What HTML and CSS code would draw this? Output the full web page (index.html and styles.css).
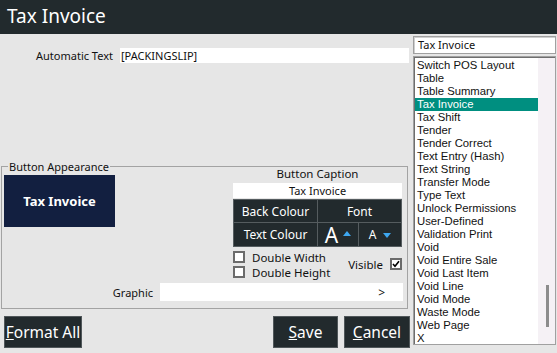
FILE: index.html
```html
<!DOCTYPE html>
<html>
<head>
<meta charset="utf-8">
<link rel="stylesheet" href="styles.css">
</head>
<body>
<div class="window">
  <header class="titlebar">Tax Invoice</header>
  <div class="main">
    <div class="left">
      <div class="auto-row">
        <span class="field-label auto-label">Automatic Text</span>
        <div class="textbox auto-input">[PACKINGSLIP]</div>
      </div>

      <div class="group">
        <span class="legend">Button Appearance</span>
        <div class="group-top">
          <div class="preview">Tax Invoice</div>
          <div class="caption-col">
            <div class="caption-label">Button Caption</div>
            <div class="caption-input">Tax Invoice</div>
            <div class="style-grid">
              <div class="cell">Back Colour</div>
              <div class="cell span2">Font</div>
              <div class="cell">Text Colour</div>
              <div class="cell"><span class="big-a">A</span><span class="tri up"></span></div>
              <div class="cell"><span class="small-a">A</span><span class="tri down"></span></div>
            </div>
            <div class="checks">
              <div class="check-list">
                <div class="check"><span class="box"></span><span>Double Width</span></div>
                <div class="check"><span class="box"></span><span>Double Height</span></div>
              </div>
              <div class="check visible">
                <span>Visible</span>
                <span class="box checked"><svg viewBox="0 0 8 8" width="8" height="8"><path d="M1 4 L3 6.2 L7 1.2" fill="none" stroke="#000" stroke-width="1.6"/></svg></span>
              </div>
            </div>
          </div>
        </div>
        <div class="graphic-row">
          <span class="field-label graphic-label">Graphic</span>
          <div class="textbox graphic-input"><span>&gt;</span></div>
        </div>
      </div>

      <div class="actions">
        <button class="btn format"><u>F</u>ormat All</button>
        <button class="btn save"><u>S</u>ave</button>
        <button class="btn cancel"><u>C</u>ancel</button>
      </div>
    </div>

    <div class="right">
      <div class="search">Tax Invoice</div>
      <div class="list">
        <ul class="items">
          <li>Switch POS Layout</li>
          <li>Table</li>
          <li>Table Summary</li>
          <li class="selected">Tax Invoice</li>
          <li>Tax Shift</li>
          <li>Tender</li>
          <li>Tender Correct</li>
          <li>Text Entry (Hash)</li>
          <li>Text String</li>
          <li>Transfer Mode</li>
          <li>Type Text</li>
          <li>Unlock Permissions</li>
          <li>User-Defined</li>
          <li>Validation Print</li>
          <li>Void</li>
          <li>Void Entire Sale</li>
          <li>Void Last Item</li>
          <li>Void Line</li>
          <li>Void Mode</li>
          <li>Waste Mode</li>
          <li>Web Page</li>
          <li>X</li>
        </ul>
        <div class="scrollbar"><div class="thumb"></div></div>
      </div>
    </div>
  </div>
</div>
</body>
</html>
```

FILE: styles.css
```css
* { box-sizing: border-box; }
html, body { margin: 0; padding: 0; }
body {
  width: 557px;
  height: 353px;
  overflow: hidden;
  background: #e6e6e6;
  font-family: "Noto Sans", "Open Sans", sans-serif;
  font-size: 11px;
  color: #111;
}
.window { width: 557px; height: 353px; display: flex; flex-direction: column; }
.titlebar {
  height: 34px;
  background: #222a2d;
  color: #fff;
  font-size: 19px;
  line-height: 33px;
  padding-left: 7px;
}
.main { display: flex; height: 319px; }
.left { width: 410px; display: flex; flex-direction: column; }
.right { width: 143px; margin-left: 3px; display: flex; flex-direction: column; }

.auto-row { display: flex; align-items: center; margin-top: 14px; height: 15px; }
.field-label { text-align: right; }
.auto-label { width: 113px; }
.textbox { background: #fff; height: 100%; }
.auto-input { width: 289px; margin-left: 7px; line-height: 15px; padding-left: 1px; }

.group {
  position: relative;
  margin-top: 103px;
  margin-left: 1px;
  width: 407px;
  height: 143px;
  border: 1px solid #a3a3a3;
}
.legend {
  position: absolute;
  left: 6px;
  top: -8px;
  padding: 0 1px;
  background: #e6e6e6;
  line-height: 15px;
}
.group-top { display: flex; align-items: flex-start; }
.preview {
  margin-top: 8px;
  margin-left: 2px;
  width: 111px;
  height: 52px;
  background: #121f40;
  color: #fff;
  font-weight: bold;
  font-size: 13px;
  display: flex;
  align-items: center;
  justify-content: center;
}
.caption-col { margin-left: auto; margin-right: 5px; width: 169px; }
.caption-label { height: 16px; line-height: 14px; text-align: center; font-size: 11.5px; }
.caption-input { height: 15px; line-height: 15px; background: #fff; text-align: center; }
.style-grid {
  margin-top: 1px;
  display: grid;
  grid-template-columns: 84px 41px 42px;
  grid-template-rows: 23px 23px;
  background: #222a2d;
  border: 1px solid #555c5f;
}
.cell {
  color: #fff;
  font-size: 12px;
  display: flex;
  align-items: center;
  justify-content: center;
  border-right: 1px solid #555c5f;
  border-bottom: 1px solid #555c5f;
}
.cell:nth-child(2), .cell:nth-child(5) { border-right: 0; }
.cell:nth-child(3), .cell:nth-child(4), .cell:nth-child(5) { border-bottom: 0; }
.span2 { grid-column: span 2; }
.big-a { font-size: 21px; line-height: 20px; margin-right: 5px; }
.small-a { font-size: 12px; margin-right: 7px; }
.tri { width: 0; height: 0; border-left: 4.5px solid transparent; border-right: 4.5px solid transparent; }
.tri.up { border-bottom: 5px solid #3ea8f0; margin-top: -2px; }
.tri.down { border-top: 5px solid #3ea8f0; margin-top: 1px; }

.checks { display: flex; margin-top: 4px; align-items: flex-start; }
.check-list { display: flex; flex-direction: column; gap: 3px; }
.check { display: flex; align-items: center; gap: 7px; height: 12px; font-size: 11.5px; }
.box {
  width: 12px;
  height: 12px;
  border: 2px solid #6b6b6b;
  background: #fff;
  display: flex;
  align-items: center;
  justify-content: center;
}
.visible { margin-left: auto; margin-top: 7px; gap: 7px; }

.graphic-row { display: flex; align-items: center; height: 18px; margin-top: 5px; }
.graphic-label { width: 151px; }
.graphic-input {
  margin-left: 7px;
  width: 243px;
  display: flex;
  align-items: center;
  justify-content: flex-end;
  padding-right: 18px;
  font-size: 12px;
}

.actions { display: flex; margin-top: 7px; }
.btn {
  height: 32px;
  background: #222a2d;
  color: #fff;
  border: 1px solid #50575a;
  font-family: inherit;
  font-size: 15.5px;
  padding: 0;
}
.format { width: 78px; margin-left: 4px; }
.save { width: 65px; margin-left: auto; }
.cancel { width: 66px; margin-left: 6px; }

.search {
  margin-top: 2px;
  height: 18px;
  background: #fff;
  border: 1px solid #a0a0a0;
  box-shadow: inset 1px 1px 0 #cfcfcf;
  line-height: 16px;
  padding-left: 4px;
}
.list {
  margin-top: 2px;
  height: 289px;
  display: flex;
  background: #fff;
  border: 1px solid #a0a0a0;
  box-shadow: inset 1px 1px 0 #6e6e6e;
  padding: 1px 0 0 1px;
}
.items {
  list-style: none;
  margin: 0;
  padding: 1px 0 0;
  width: 123px;
  font-family: "Liberation Sans", Arial, sans-serif;
  font-size: 11.3px;
}
.items li { height: 13px; line-height: 13px; padding-left: 2px; white-space: nowrap; }
.items li.selected { background: #008f80; color: #fff; }
.scrollbar { width: 17px; background: #f5f1f5; }
.thumb { margin: 227px 0 0 8px; width: 3px; height: 42px; background: #8c8c8c; }
```
